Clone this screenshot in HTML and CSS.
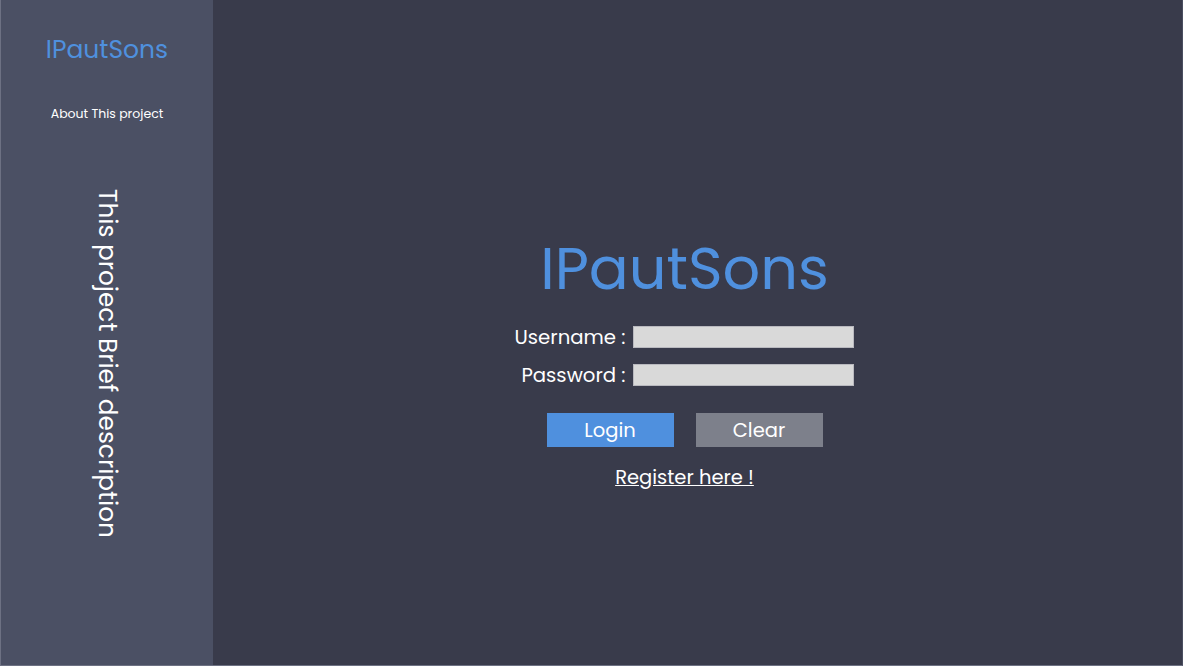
FILE: index.html
```html
<!DOCTYPE html>
<html lang="en">
<head>
<meta charset="utf-8">
<title>IPautSons</title>
<link rel="stylesheet" href="styles.css">
</head>
<body>
<div class="page">
  <aside class="sidebar">
    <div class="brand">IPautSons</div>
    <div class="about">About This project</div>
    <div class="brief">This project Brief description</div>
  </aside>
  <main class="main">
    <h1 class="title">IPautSons</h1>
    <form class="form">
      <label class="label" for="user">Username :</label>
      <input class="field" id="user" type="text">
      <label class="label" for="pass">Password :</label>
      <input class="field" id="pass" type="password">
    </form>
    <div class="buttons">
      <button class="btn btn-login" type="button">Login</button>
      <button class="btn btn-clear" type="button">Clear</button>
    </div>
    <a class="register" href="#">Register here !</a>
  </main>
</div>
</body>
</html>
```
FILE: styles.css
```css
html, body {
  margin: 0;
  padding: 0;
  height: 100%;
}
body {
  font-family: "Poppins", "Open Sans", sans-serif;
  background: #393b4b;
}
.page {
  box-sizing: border-box;
  width: 1183px;
  height: 666px;
  display: flex;
  border: 1px solid #6d7183;
  border-top: none;
  border-right-color: #4a4e60;
}
.sidebar {
  width: 212px;
  flex: none;
  background: #4b5064;
  display: flex;
  flex-direction: column;
  align-items: center;
}
.brand {
  margin-top: 35px;
  font-size: 25px;
  color: #4f90de;
  line-height: 30px;
}
.about {
  margin-top: 41px;
  font-size: 12.5px;
  color: #ffffff;
  line-height: 16px;
}
.brief {
  margin-top: 67px;
  writing-mode: vertical-rl;
  font-size: 24.8px;
  color: #ffffff;
  line-height: 30px;
}
.main {
  flex: 1;
  display: flex;
  flex-direction: column;
  align-items: center;
  padding-right: 26px;
  color: #ffffff;
}
.title {
  margin: 233px 0 0;
  font-size: 59px;
  font-weight: 400;
  color: #4f90de;
  line-height: 72px;
}
.form {
  margin-top: 21px;
  display: grid;
  grid-template-columns: auto 221px;
  column-gap: 8px;
  row-gap: 16px;
  align-items: center;
}
.label {
  justify-self: end;
  font-size: 19.7px;
  line-height: 22px;
}
.field {
  box-sizing: border-box;
  width: 221px;
  height: 22px;
  margin: 0;
  border: 1px solid #b9b9bf;
  background: #d9d9d9;
  padding: 0 4px;
}
.buttons {
  margin-top: 27px;
  display: flex;
  gap: 22px;
}
.btn {
  width: 127px;
  height: 34px;
  border: none;
  color: #ffffff;
  font-family: inherit;
  font-size: 19.5px;
  padding: 0;
}
.btn-login { background: #4f90de; }
.btn-clear { background: #7d808b; }
.register {
  margin-top: 19px;
  font-size: 19.5px;
  line-height: 24px;
  color: #ffffff;
}
```
